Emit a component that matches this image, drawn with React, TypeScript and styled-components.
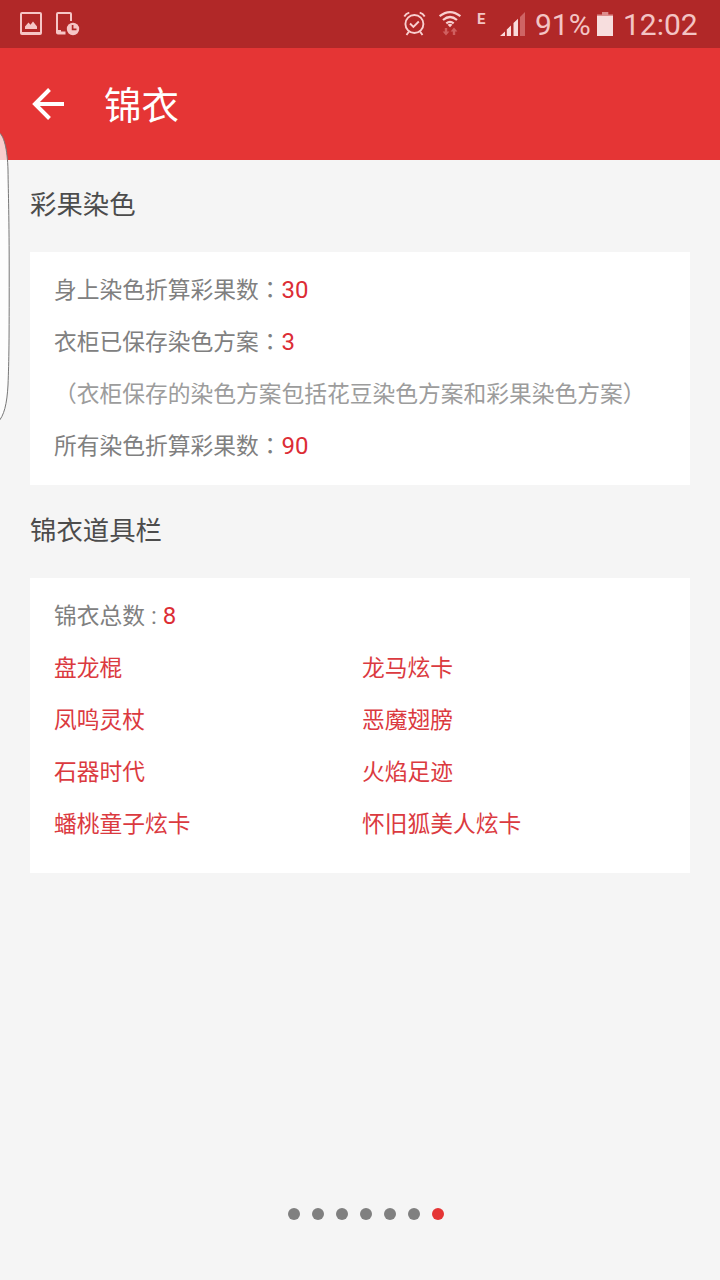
import React from 'react';
import styled, { createGlobalStyle } from 'styled-components';

const GlobalStyle = createGlobalStyle`
  * { box-sizing: border-box; }
  body {
    margin: 0;
    background: #f5f5f5;
    font-family: Roboto, 'Noto Sans CJK SC', sans-serif;
  }
`;

const Screen = styled.div`
  position: relative;
  width: 720px;
  height: 1280px;
  display: flex;
  flex-direction: column;
  overflow: hidden;
  background: #f5f5f5;
`;

const StatusBar = styled.div`
  height: 48px;
  flex: none;
  display: flex;
  align-items: center;
  padding: 0 22px 0 20px;
  background: #b12828;
  color: #f3c4c4;
`;

const StatusIcon = styled.svg<{ $gap?: number }>`
  display: block;
  flex: none;
  height: 48px;
  margin-right: ${(p) => p.$gap ?? 0}px;
`;

const Spacer = styled.div`
  flex: 1;
`;

const StatusText = styled.span<{ $width: number; $gap?: number }>`
  width: ${(p) => p.$width}px;
  margin-right: ${(p) => p.$gap ?? 0}px;
  font-size: 30px;
  font-weight: 400;
  line-height: 48px;
  height: 48px;
  padding-top: 1px;
  white-space: nowrap;
`;

const NetworkType = styled.span`
  width: 9px;
  margin-right: 14px;
  height: 48px;
  padding-top: 10px;
  font-size: 15px;
  font-weight: 700;
  line-height: 18px;
`;

const AppBar = styled.header`
  height: 112px;
  flex: none;
  display: flex;
  align-items: center;
  padding-left: 32px;
  background: #e53535;
  color: #fff;
`;

const Title = styled.h1`
  margin: 0 0 0 40px;
  padding-top: 3px;
  font-size: 37.5px;
  line-height: 56px;
  font-weight: 400;
`;

const Content = styled.main`
  flex: 1;
  padding: 0 30px;
`;

const SectionTitle = styled.h2<{ $height: number }>`
  margin: 0;
  height: ${(p) => p.$height}px;
  padding-top: ${(p) => p.$height - 67}px;
  font-size: 26.4px;
  line-height: 40px;
  font-weight: 400;
  color: #4c4c4c;
`;

const Card = styled.section<{ $bottom: number }>`
  padding: 12px 24px ${(p) => p.$bottom}px;
  background: #fff;
`;

const Row = styled.div<{ $muted?: boolean }>`
  height: 52px;
  padding-top: 2px;
  display: flex;
  align-items: center;
  font-size: 22.75px;
  line-height: 52px;
  white-space: pre;
  color: ${(p) => (p.$muted ? '#9c9c9c' : '#808080')};
`;

const WideColon = styled.span`
  margin-top: -4px;
  font-family: 'Noto Sans CJK TC', sans-serif;
`;

const Latin = styled.span`
  margin-top: -2px;
  font-size: 24px;
`;

const Value = styled(Latin)`
  color: #dc2d35;
`;

const ItemGrid = styled.div`
  display: grid;
  grid-template-columns: 308px 1fr;
`;

const Item = styled(Row)`
  color: #db3a3f;
`;

const Pager = styled.nav`
  height: 72px;
  flex: none;
  display: flex;
  justify-content: center;
  gap: 12px;
  padding-left: 12px;
`;

const Dot = styled.span<{ $active?: boolean }>`
  width: 12px;
  height: 12px;
  border-radius: 50%;
  background: ${(p) => (p.$active ? '#e53535' : '#808080')};
`;

const EdgeHandle = styled.svg`
  position: absolute;
  left: 0;
  top: 128px;
`;

const stats = [
  { label: '身上染色折算彩果数', value: 30 },
  { label: '衣柜已保存染色方案', value: 3, note: '（衣柜保存的染色方案包括花豆染色方案和彩果染色方案）' },
  { label: '所有染色折算彩果数', value: 90 },
];

const items = [
  '盘龙棍', '龙马炫卡',
  '凤鸣灵杖', '恶魔翅膀',
  '石器时代', '火焰足迹',
  '蟠桃童子炫卡', '怀旧狐美人炫卡',
];

const PictureIcon = () => (
  <StatusIcon width="23" viewBox="20 0 23 48" $gap={12}>
    <path fill="#f6c6c6" fillRule="evenodd" d="M22 12H40Q42 12 42 14V33Q42 35 40 35H22Q20 35 20 33V14Q20 12 22 12ZM22 14V32H40V14Z" />
    <path fill="#f6c6c6" d="M25 29V26.5L28.5 22.5L30.5 24.8L33 21.5L37 26.5V29Z" />
  </StatusIcon>
);

const DeviceClockIcon = () => (
  <StatusIcon width="25" viewBox="55 0 25 48">
    <path fill="none" stroke="#f6c6c6" strokeWidth="2" d="M71 21V14Q71 13 70 13H58Q57 13 57 14V33" />
    <path fill="#f6c6c6" d="M56 30H61V31.5H65.5V34.5H58Q56 34.5 56 32.5Z" />
    <circle cx="73" cy="29" r="6.2" fill="#f6c6c6" />
    <path fill="none" stroke="#b12828" strokeWidth="1.7" d="M72.6 25V29.4H76.5" />
  </StatusIcon>
);

const AlarmIcon = () => (
  <StatusIcon width="24" viewBox="403 0 24 48" $gap={11}>
    <g fill="none" stroke="#f9cfcf" strokeWidth="1.9">
      <circle cx="414.4" cy="24" r="9" />
      <path d="M410 23.5L413.4 27L418.8 21.5M404.3 16.5Q406 13.5 409.3 12.7M424.7 16.5Q423 13.5 419.7 12.7M409 31.5L406.5 35M420 31.5L422.5 35" />
    </g>
  </StatusIcon>
);

const WifiIcon = () => (
  <StatusIcon width="24" viewBox="438 0 24 48" $gap={15}>
    <g fill="none" stroke="#f9cfcf" strokeWidth="2.2">
      <path d="M439.6 16.2Q450 8 460.4 16.2M443 20Q450 14 457 20M446.3 23.3Q450 20.3 453.7 23.3" />
    </g>
    <path fill="#f9cfcf" d="M447.6 24.7Q450 23 452.4 24.7L450 27.3Z" />
    <path fill="#d06060" d="M444.8 28H447.2V31.5H449.4L446 35.6L442.6 31.5H444.8ZM452.8 35V31.5H450.6L454 27.5L457.4 31.5H455.2V35Z" />
  </StatusIcon>
);

const SignalIcon = () => (
  <StatusIcon width="26" viewBox="500 0 26 48" $gap={9}>
    <path fill="#f9dada" d="M500 36L505 31.4V36ZM506.8 29.5L511 25.5V36H506.8ZM513.5 23L518 18.8V36H513.5Z" />
    <path fill="#cf6464" d="M520 17L525 12V36H520Z" />
  </StatusIcon>
);

const BatteryIcon = () => (
  <StatusIcon width="17" viewBox="597 0 17 48" $gap={9}>
    <path fill="#dd8c8c" d="M602 12H608.3V14.5H613V17H597V14.5H602Z" />
    <path fill="#f7dede" d="M597 16H613V36H597Z" />
  </StatusIcon>
);

export default function App() {
  return (
    <>
      <GlobalStyle />
      <Screen>
        <StatusBar>
          <PictureIcon />
          <DeviceClockIcon />
          <Spacer />
          <AlarmIcon />
          <WifiIcon />
          <NetworkType>E</NetworkType>
          <SignalIcon />
          <StatusText $width={55} $gap={7}>91%</StatusText>
          <BatteryIcon />
          <StatusText $width={75}>12:02</StatusText>
        </StatusBar>
        <AppBar>
          <svg width="32" height="32" viewBox="0 0 32 32" fill="none" stroke="#fff" strokeWidth="4">
            <path d="M32 16H3M17.5 1.5L3 16L17.5 30.5" />
          </svg>
          <Title>锦衣</Title>
        </AppBar>
        <Content>
          <SectionTitle $height={92}>彩果染色</SectionTitle>
          <Card $bottom={13}>
            {stats.map((s) => (
              <React.Fragment key={s.label}>
                <Row>
                  {s.label}
                  <WideColon>：</WideColon>
                  <Value>{s.value}</Value>
                </Row>
                {s.note && <Row $muted>{s.note}</Row>}
              </React.Fragment>
            ))}
          </Card>
          <SectionTitle $height={93}>锦衣道具栏</SectionTitle>
          <Card $bottom={23}>
            <Row>
              锦衣总数<Latin>{' : '}</Latin>
              <Value>{items.length}</Value>
            </Row>
            <ItemGrid>
              {items.map((name) => (
                <Item key={name}>{name}</Item>
              ))}
            </ItemGrid>
          </Card>
        </Content>
        <Pager>
          {[0, 1, 2, 3, 4, 5, 6].map((i) => (
            <Dot key={i} $active={i === 6} />
          ))}
        </Pager>
        <EdgeHandle width="12" height="300" viewBox="0 128 12 300">
          <path
            d="M-2 132C4 134 7.5 150 8 170C8.3 195 9.2 215 9.2 276C9.2 340 9 360 8 385C7 404 4 416 -2 422Z"
            fill="#fff"
            fillOpacity="0.75"
            stroke="#777"
            strokeWidth="1"
          />
        </EdgeHandle>
      </Screen>
    </>
  );
}
